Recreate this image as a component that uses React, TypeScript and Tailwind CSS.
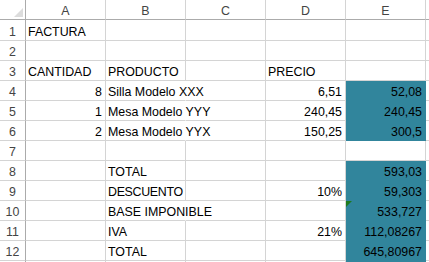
import React from "react";

type Cell = { t?: string; r?: boolean; teal?: boolean; over?: boolean; tri?: boolean; tight?: boolean };

const E = (): Cell => ({});

const rows: Cell[][] = [
  [{ t: "FACTURA" }, E(), E(), E(), E()],
  [E(), E(), E(), E(), E()],
  [{ t: "CANTIDAD" }, { t: "PRODUCTO" }, E(), { t: "PRECIO" }, E()],
  [{ t: "8", r: true }, { t: "Silla Modelo XXX", over: true }, E(), { t: "6,51", r: true }, { t: "52,08", r: true, teal: true }],
  [{ t: "1", r: true }, { t: "Mesa Modelo YYY", over: true }, E(), { t: "240,45", r: true }, { t: "240,45", r: true, teal: true }],
  [{ t: "2", r: true }, { t: "Mesa Modelo YYX", over: true }, E(), { t: "150,25", r: true }, { t: "300,5", r: true, teal: true }],
  [E(), E(), E(), E(), E()],
  [E(), { t: "TOTAL" }, E(), E(), { t: "593,03", r: true, teal: true }],
  [E(), { t: "DESCUENTO", tight: true }, E(), { t: "10%", r: true }, { t: "59,303", r: true, teal: true }],
  [E(), { t: "BASE IMPONIBLE", over: true }, E(), E(), { t: "533,727", r: true, teal: true, tri: true }],
  [E(), { t: "IVA" }, E(), { t: "21%", r: true }, { t: "112,08267", r: true, teal: true }],
  [E(), { t: "TOTAL" }, E(), E(), { t: "645,80967", r: true, teal: true }],
];

const cols = ["A", "B", "C", "D", "E"];

function DataCell({ c }: { c: Cell }) {
  const base = "relative flex items-end pb-[1px] whitespace-nowrap text-[12.4px] leading-[14px] text-black border-b border-r";
  const color = c.teal
    ? "bg-[#31859c] border-[#31859c]"
    : c.over
    ? "border-b-[#d4d4d4] border-r-transparent"
    : "border-[#d4d4d4]";
  const align = c.r ? "justify-end pr-[3px] overflow-hidden" : "justify-start pl-[2px] overflow-visible z-10";
  return (
    <div className={`${base} ${color} ${align} ${c.tight ? "tracking-[-0.3px]" : ""}`}>
      {c.tri && (
        <svg className="absolute left-0 top-0" width="6" height="6" viewBox="0 0 6 6">
          <polygon points="0,0 6,0 0,6" fill="#1e7a1e" />
        </svg>
      )}
      {c.t && <span>{c.t}</span>}
    </div>
  );
}

export default function App() {
  return (
    <div className="grid h-[262px] w-[429px] overflow-hidden bg-white font-['Liberation_Sans',Arial,sans-serif] grid-cols-[26px_repeat(5,80px)_1fr] grid-rows-[20px_21px_repeat(11,20px)_1fr]">
      <div className="relative border-b border-r border-[#ababab]">
        <svg className="absolute left-0 top-0" width="25" height="19" viewBox="0 0 25 19">
          <polygon points="23,8 23,17 14,17" fill="#dcdcdc" />
        </svg>
      </div>
      {cols.map((l) => (
        <div
          key={l}
          className="flex items-end justify-center pb-[1px] text-[12.4px] leading-[14px] text-[#444] border-b border-b-[#ababab] border-r border-r-[#d4d4d4]"
        >
          {l}
        </div>
      ))}
      <div className="border-b border-[#ababab]" />
      {rows.map((row, i) => (
        <React.Fragment key={i}>
          <div className="flex items-end justify-center pb-[1px] text-[12.4px] leading-[14px] text-[#444] border-r border-r-[#ababab] border-b border-b-[#d4d4d4]">
            {i + 1}
          </div>
          {row.map((c, j) => (
            <DataCell key={j} c={c} />
          ))}
          <div className="border-b border-[#d4d4d4]" />
        </React.Fragment>
      ))}
      <div className="border-r border-[#ababab]" />
      <div className="border-r border-[#d4d4d4]" />
      <div className="border-r border-[#d4d4d4]" />
      <div className="border-r border-[#d4d4d4]" />
      <div className="border-r border-[#d4d4d4]" />
      <div className="bg-[#31859c]" />
      <div />
    </div>
  );
}
